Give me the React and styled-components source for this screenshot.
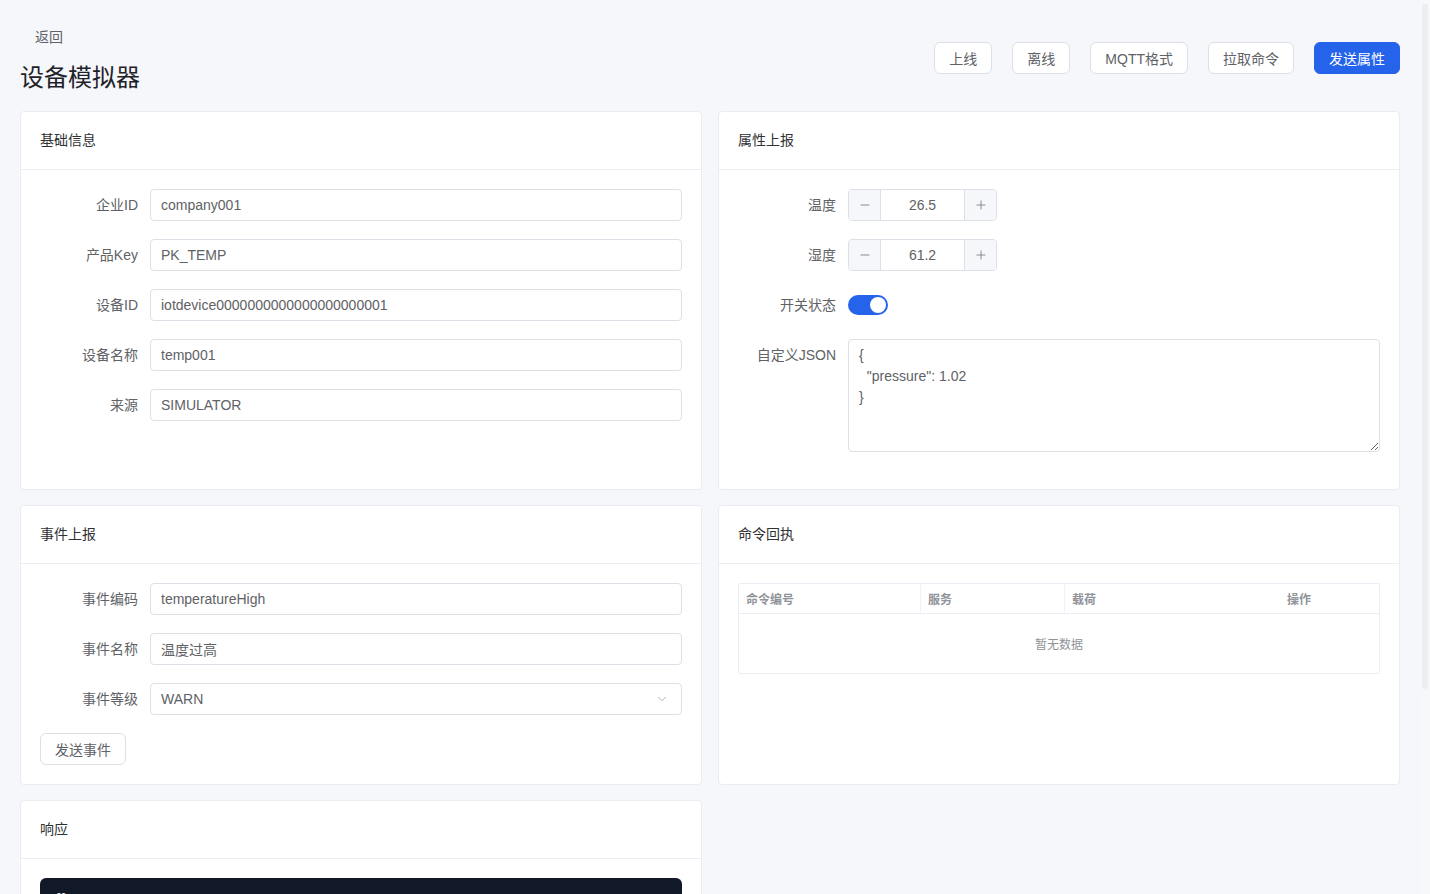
import React from "react";
import styled, { createGlobalStyle } from "styled-components";
import { ChevronDown, Minus, Plus } from "lucide-react";

const GlobalStyle = createGlobalStyle`
	html, body {
		margin: 0;
		padding: 0;
		background: #f5f7fa;
		font-family: "Liberation Sans", "Noto Sans CJK SC", sans-serif;
		color: #303133;
	}
	* { box-sizing: border-box; }
`;

const Page = styled.div`
	padding: 20px 30px 20px 20px;
`;

// mimics the narrow page scrollbar seen at the right edge
const ScrollTrack = styled.div`
	position: fixed;
	top: 0;
	right: 0;
	width: 10px;
	height: 100vh;
	background: #f7f8fa;
	&::after {
		content: "";
		position: absolute;
		top: 4px;
		left: 2px;
		width: 6px;
		height: 685px;
		border-radius: 3px;
		background: #eceef2;
	}
`;

const Header = styled.div`
	display: flex;
	align-items: center;
	justify-content: space-between;
	margin-bottom: 17px;
`;

const TitleBlock = styled.div`
	display: flex;
	flex-direction: column;
	align-items: flex-start;
`;

const BackLink = styled.button`
	height: 32px;
	padding: 0 15px;
	border: none;
	background: transparent;
	font: inherit;
	font-size: 14px;
	color: #606266;
	cursor: pointer;
`;

const Title = styled.h1`
	margin: 10px 0 0;
	font-size: 24px;
	line-height: 32px;
	font-weight: 400;
	color: #1f2329;
`;

const Actions = styled.div`
	display: flex;
	gap: 20px;
	padding-top: 2px;
`;

const Button = styled.button`
	height: 32px;
	padding: 0 14px;
	border-radius: 6px;
	font: inherit;
	font-size: 14px;
	cursor: pointer;
	border: 1px solid ${p => (p.$primary ? "#2563eb" : "#dcdfe6")};
	background: ${p => (p.$primary ? "#2563eb" : "#fff")};
	color: ${p => (p.$primary ? "#fff" : "#606266")};
`;

const Grid = styled.div`
	display: grid;
	grid-template-columns: 1fr 1fr;
	column-gap: 16px;
	row-gap: 15px;
	align-items: stretch;
`;

const Card = styled.section`
	background: #fff;
	border: 1px solid #e9ecf1;
	border-radius: 4px;
	display: flex;
	flex-direction: column;
`;

const CardHeader = styled.div`
	padding: 18px 19px 19px;
	font-size: 14px;
	line-height: 20px;
	color: #303133;
	border-bottom: 1px solid #ebeef5;
`;

const CardBody = styled.div`
	padding: 19px 19px 19px;
`;

const FormItem = styled.div`
	display: flex;
	align-items: flex-start;
	margin-bottom: 18px;
`;

const Label = styled.label`
	width: 110px;
	flex-shrink: 0;
	padding-right: 12px;
	text-align: right;
	font-size: 14px;
	line-height: 32px;
	color: #606266;
`;

const Field = styled.div`
	flex: 1;
	position: relative;
	height: 32px;
	border: 1px solid #dcdfe6;
	border-radius: 4px;
	padding: 0 10px;
	display: flex;
	align-items: center;
	font-size: 14px;
	color: #606266;
	background: #fff;
`;

const SelectArrow = styled(ChevronDown)`
	position: absolute;
	right: 12px;
	top: 8px;
	color: #a8abb2;
`;

const NumberBox = styled.div`
	width: 149px;
	height: 32px;
	display: flex;
	border: 1px solid #dcdfe6;
	border-radius: 4px;
	overflow: hidden;
`;

const StepButton = styled.span`
	width: 32px;
	display: flex;
	align-items: center;
	justify-content: center;
	background: #f5f7fa;
	color: #7b7f87;
	border-left: ${p => (p.$side === "right" ? "1px solid #dcdfe6" : "none")};
	border-right: ${p => (p.$side === "left" ? "1px solid #dcdfe6" : "none")};
`;

const NumberValue = styled.span`
	flex: 1;
	display: flex;
	align-items: center;
	justify-content: center;
	font-size: 14px;
	color: #606266;
`;

const SwitchWrap = styled.div`
	height: 32px;
	display: flex;
	align-items: center;
`;

const Switch = styled.span`
	position: relative;
	width: 40px;
	height: 20px;
	border-radius: 10px;
	background: #2563eb;
	&::after {
		content: "";
		position: absolute;
		top: 2px;
		right: 2px;
		width: 16px;
		height: 16px;
		border-radius: 50%;
		background: #fff;
	}
`;

const TextArea = styled.textarea`
	flex: 1;
	height: 113px;
	padding: 5px 10px;
	border: 1px solid #dcdfe6;
	border-radius: 4px;
	font: inherit;
	font-size: 14px;
	line-height: 21px;
	color: #606266;
	resize: vertical;
	outline: none;
`;

const Table = styled.div`
	border: 1px solid #ebeef5;
	border-radius: 2px;
	font-size: 12px;
`;

const TableHead = styled.div`
	display: grid;
	grid-template-columns: 182px 144px 1fr 160px;
	height: 30px;
	border-bottom: 1px solid #ebeef5;
`;

const HeadCell = styled.div`
	display: flex;
	align-items: center;
	justify-content: ${p => (p.$center ? "center" : "flex-start")};
	padding: 0 7px;
	font-weight: 700;
	color: #909399;
	border-right: ${p => (p.$divider ? "1px solid #f0f2f5" : "none")};
`;

const Empty = styled.div`
	height: 59px;
	display: flex;
	align-items: center;
	justify-content: center;
	color: #909399;
`;

const Code = styled.pre`
	margin: 0;
	min-height: 244px;
	padding: 12px 14px;
	border-radius: 6px;
	background: #111827;
	color: #e5e7eb;
	font-family: "Liberation Mono", monospace;
	font-size: 12px;
	line-height: 18px;
`;

const basicFields = [
	["企业ID", "company001"],
	["产品Key", "PK_TEMP"],
	["设备ID", "iotdevice0000000000000000000001"],
	["设备名称", "temp001"],
	["来源", "SIMULATOR"],
];

const NumberInput = ({ value }) => (
	<NumberBox>
		<StepButton $side="left"><Minus size={14} strokeWidth={1.5} /></StepButton>
		<NumberValue>{value}</NumberValue>
		<StepButton $side="right"><Plus size={14} strokeWidth={1.5} /></StepButton>
	</NumberBox>
);

export default function App() {
	return (
		<>
			<GlobalStyle />
			<ScrollTrack />
			<Page>
				<Header>
					<TitleBlock>
						<BackLink>返回</BackLink>
						<Title>设备模拟器</Title>
					</TitleBlock>
					<Actions>
						<Button>上线</Button>
						<Button>离线</Button>
						<Button>MQTT格式</Button>
						<Button>拉取命令</Button>
						<Button $primary>发送属性</Button>
					</Actions>
				</Header>

				<Grid>
					<Card>
						<CardHeader>基础信息</CardHeader>
						<CardBody>
							{basicFields.map(([label, value]) => (
								<FormItem key={label}>
									<Label>{label}</Label>
									<Field>{value}</Field>
								</FormItem>
							))}
						</CardBody>
					</Card>

					<Card>
						<CardHeader>属性上报</CardHeader>
						<CardBody>
							<FormItem>
								<Label>温度</Label>
								<NumberInput value="26.5" />
							</FormItem>
							<FormItem>
								<Label>湿度</Label>
								<NumberInput value="61.2" />
							</FormItem>
							<FormItem>
								<Label>开关状态</Label>
								<SwitchWrap><Switch /></SwitchWrap>
							</FormItem>
							<FormItem>
								<Label>自定义JSON</Label>
								<TextArea defaultValue={'{\n  "pressure": 1.02\n}'} />
							</FormItem>
						</CardBody>
					</Card>

					<Card>
						<CardHeader>事件上报</CardHeader>
						<CardBody>
							<FormItem>
								<Label>事件编码</Label>
								<Field>temperatureHigh</Field>
							</FormItem>
							<FormItem>
								<Label>事件名称</Label>
								<Field>温度过高</Field>
							</FormItem>
							<FormItem>
								<Label>事件等级</Label>
								<Field>
									WARN
									<SelectArrow size={14} strokeWidth={1.5} />
								</Field>
							</FormItem>
							<Button>发送事件</Button>
						</CardBody>
					</Card>

					<Card>
						<CardHeader>命令回执</CardHeader>
						<CardBody>
							<Table>
								<TableHead>
									<HeadCell $divider>命令编号</HeadCell>
									<HeadCell $divider>服务</HeadCell>
									<HeadCell>载荷</HeadCell>
									<HeadCell $center>操作</HeadCell>
								</TableHead>
								<Empty>暂无数据</Empty>
							</Table>
						</CardBody>
					</Card>

					<Card>
						<CardHeader>响应</CardHeader>
						<CardBody>
							<Code>{"{}"}</Code>
						</CardBody>
					</Card>
				</Grid>
			</Page>
		</>
	);
}
